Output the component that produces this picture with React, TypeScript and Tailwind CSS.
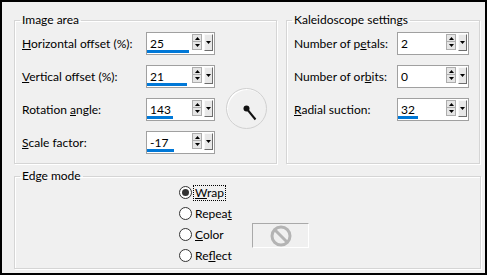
import type { ReactNode } from 'react';

type Field = {
  label: ReactNode;
  value: string;
  bar: number;
};

const IMAGE_FIELDS: Field[] = [
  { label: <><u>H</u>orizontal offset (%):</>, value: '25', bar: 42 },
  { label: <><u>V</u>ertical offset (%):</>, value: '21', bar: 40 },
  { label: <>Rotation <u>a</u>ngle:</>, value: '143', bar: 26 },
  { label: <><u>S</u>cale factor:</>, value: '-17', bar: 27 },
];

const KALEIDO_FIELDS: Field[] = [
  { label: <>Number of p<u>e</u>tals:</>, value: '2', bar: 0 },
  { label: <>Number of or<u>b</u>its:</>, value: '0', bar: 0 },
  { label: <><u>R</u>adial suction:</>, value: '32', bar: 20 },
];

function Arrow({ up }: { up?: boolean }) {
  return (
    <svg width="5" height="3" viewBox="0 0 5 3" className="block">
      <path d={up ? 'M0 3 L2.5 0 L5 3 Z' : 'M0 0 L5 0 L2.5 3 Z'} fill="#000" />
    </svg>
  );
}

function SpinBox({ value, bar, width }: { value: string; bar: number; width: string }) {
  return (
    <div className={`flex h-[23px] ${width} border border-[#a0a0a0] bg-white`}>
      <div className="relative flex-1 pl-[3px] pt-[4px] leading-[14px]">
        {value}
        {bar > 0 && (
          <div className="absolute bottom-[1px] left-0 h-[3px] bg-[#0078d7]" style={{ width: bar }} />
        )}
      </div>
      <div className="flex items-start gap-[2px] pt-[1px] pr-[1px]">
        <div className="flex flex-col">
          <div className="flex h-[8px] w-[10px] items-center justify-center border border-[#adadad] bg-[#e5e5e5]">
            <Arrow up />
          </div>
          <div className="flex h-[8px] w-[10px] items-center justify-center border border-t-0 border-[#adadad] bg-[#e5e5e5]">
            <Arrow />
          </div>
        </div>
        <div className="flex h-[17px] w-[9px] items-center justify-center border border-[#f8f8f8] border-r-[#6d6d6d] border-b-[#6d6d6d] bg-[#e8e8e8]">
          <Arrow />
        </div>
      </div>
    </div>
  );
}

function Group({ title, className, children }: { title: string; className: string; children: ReactNode }) {
  return (
    <fieldset
      className={`border border-[#d5d5d5] pl-[5px] shadow-[inset_1px_1px_0_#fff,1px_1px_0_#fff] ${className}`}
    >
      <legend className="px-[2px] leading-[16px]">{title}</legend>
      {children}
    </fieldset>
  );
}

function Radio({ label, checked, focus }: { label: ReactNode; checked?: boolean; focus?: boolean }) {
  return (
    <div className="flex h-[21px] items-center">
      <div className="flex h-[13px] w-[13px] items-center justify-center rounded-full border border-[#333] bg-white">
        {checked && <div className="h-[7px] w-[7px] rounded-full bg-[#333]" />}
      </div>
      <span
        className={`ml-[2px] px-[1px] leading-[14px] ${focus ? 'outline outline-1 outline-dotted outline-black' : ''}`}
      >
        {label}
      </span>
    </div>
  );
}

export default function App() {
  return (
    <div
      className="flex h-[275px] w-[487px] flex-col border-2 border-black bg-[#f0f0f0] pl-[12px] pt-[10px] text-[12px] text-black"
      style={{ fontFamily: 'Lato, "Noto Sans", sans-serif' }}
    >
      <div className="flex gap-[9px]">
        {/* Image area */}
        <Group title="Image area" className="h-[152px] w-[263px]">
          <div className="ml-[2px] mt-[4px] flex">
            <div className="flex flex-col gap-[10px]">
              {IMAGE_FIELDS.map((f, i) => (
                <div key={i} className="flex items-center">
                  <span className="w-[124px] leading-[14px]">{f.label}</span>
                  <SpinBox value={f.value} bar={f.bar} width="w-[69px]" />
                </div>
              ))}
            </div>
            <div className="ml-[11px] mt-[56px] h-[41px] w-[41px] rounded-full border border-[#d0d0d0] shadow-[inset_1px_1px_0_#fff]">
              <svg width="41" height="41" viewBox="0 0 41 41" className="block">
                <line x1="19.5" y1="19.5" x2="28.5" y2="30.5" stroke="#111" strokeWidth="2" />
                <circle cx="19.5" cy="19.5" r="3" fill="#111" />
              </svg>
            </div>
          </div>
        </Group>

        {/* Kaleidoscope settings */}
        <Group title="Kaleidoscope settings" className="h-[152px] w-[194px]">
          <div className="ml-[2px] mt-[4px] flex flex-col gap-[10px]">
            {KALEIDO_FIELDS.map((f, i) => (
              <div key={i} className="flex items-center">
                <span className="w-[103px] leading-[14px]">{f.label}</span>
                <SpinBox value={f.value} bar={f.bar} width="w-[72px]" />
              </div>
            ))}
          </div>
        </Group>
      </div>

      {/* Edge mode */}
      <Group title="Edge mode" className="mt-[4px] h-[101px] w-[467px]">
        <div className="ml-[159px] -mt-[2px] flex">
          <div className="flex w-[73px] flex-col">
            <Radio label={<><u>W</u>rap</>} checked focus />
            <Radio label={<>Repea<u>t</u></>} />
            <Radio label={<><u>C</u>olor</>} />
            <Radio label={<>Re<u>f</u>lect</>} />
          </div>
          <div className="mt-[41px] flex h-[25px] w-[57px] items-center justify-center border border-[#a9a9a9] border-r-white border-b-white">
            <svg width="22" height="22" viewBox="0 0 22 22">
              <circle cx="11" cy="11" r="9" fill="none" stroke="#b4b4b4" strokeWidth="3" />
              <line x1="4.5" y1="4.5" x2="17.5" y2="17.5" stroke="#b4b4b4" strokeWidth="3" />
            </svg>
          </div>
        </div>
      </Group>
    </div>
  );
}
